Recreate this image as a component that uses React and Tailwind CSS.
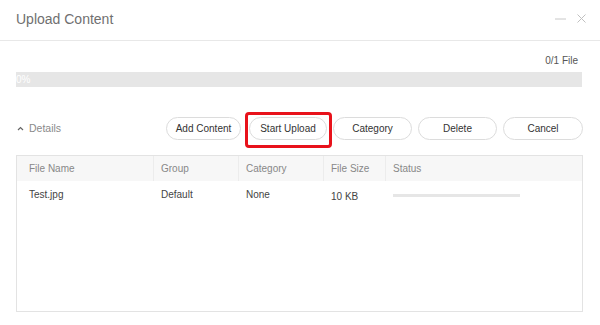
import React from "react";

const Btn = ({ children, w }) => (
  <button
    className={`h-[23px] ${w} rounded-full border border-[#dcdcdc] bg-white text-[10px] text-[#333] flex items-center justify-center`}
  >
    {children}
  </button>
);

export default function App() {
  return (
    <div className="w-[600px] h-[325px] bg-white font-['Liberation_Sans',Arial,sans-serif] overflow-hidden">
      {/* Title bar */}
      <div className="h-[41px] border-b border-[#e8e8e8] flex items-center justify-between pl-4 pr-[14px]">
        <span className="text-[14px] text-[#707070] -mt-[2px]">Upload Content</span>
        <div className="flex items-center gap-[11px] -mt-[3px]">
          <svg width="11" height="10" viewBox="0 0 11 10">
            <line x1="0" y1="5" x2="11" y2="5" stroke="#c8c8c8" strokeWidth="1" />
          </svg>
          <svg width="9" height="9" viewBox="0 0 9 9">
            <path d="M0.5 0.5 L8.5 8.5 M8.5 0.5 L0.5 8.5" stroke="#c0c0c0" strokeWidth="1" />
          </svg>
        </div>
      </div>

      <div className="pl-4 pr-[17px]">
        {/* file count */}
        <div className="h-[31px] flex items-center justify-end pr-[5px] pt-[7px]">
          <span className="text-[10px] text-[#555]">0/1 File</span>
        </div>
        {/* progress bar */}
        <div className="h-[15px] w-[566px] bg-[#e6e6e6] flex items-center">
          <span className="text-[10px] text-white leading-none">0%</span>
        </div>

        {/* details row */}
        <div className="mt-[30px] h-[23px] flex items-center">
          <div className="flex items-center gap-[5px] pl-[1px] flex-1">
            <svg width="7" height="5" viewBox="0 0 7 5">
              <path d="M1 4 L3.5 1.5 L6 4" stroke="#666" strokeWidth="1.2" fill="none" />
            </svg>
            <span className="text-[10.5px] text-[#8a8a8a]">Details</span>
          </div>
          <div className="flex items-center">
            <Btn w="w-[75px]">Add Content</Btn>
            <div className="relative ml-[8px]">
              <Btn w="w-[78px]">Start Upload</Btn>
              <div className="absolute left-[-4px] right-[-5px] top-[-5px] bottom-[-8px] border-[3px] border-[#e8121b] rounded-[4px] pointer-events-none" />
            </div>
            <div className="ml-[6px]">
              <Btn w="w-[79px]">Category</Btn>
            </div>
            <div className="ml-[6px]">
              <Btn w="w-[79px]">Delete</Btn>
            </div>
            <div className="ml-[6px]">
              <Btn w="w-[80px]">Cancel</Btn>
            </div>
          </div>
        </div>

        {/* table */}
        <div className="mt-[15px] h-[157px] w-[567px] border border-[#e3e3e3]">
          <div className="h-[25px] bg-[#f7f7f7] grid grid-cols-[137px_85px_85px_62px_1fr] text-[10px] text-[#888]">
            <div className="flex items-center pl-3 border-r border-[#ececec]">File Name</div>
            <div className="flex items-center pl-[7px] border-r border-[#ececec]">Group</div>
            <div className="flex items-center pl-[7px] border-r border-[#ececec]">Category</div>
            <div className="flex items-center pl-[7px] border-r border-[#ececec]">File Size</div>
            <div className="flex items-center pl-[7px]">Status</div>
          </div>
          <div className="h-[26px] grid grid-cols-[137px_85px_85px_62px_1fr] text-[10px] text-[#444]">
            <div className="flex items-center pl-3">Test.jpg</div>
            <div className="flex items-center pl-[7px]">Default</div>
            <div className="flex items-center pl-[7px]">None</div>
            <div className="flex items-center pl-[7px] pt-[5px]">10 KB</div>
            <div className="flex items-center pl-[7px] pt-[3px]">
              <div className="w-[127px] h-[3px] bg-[#e6e6e6]" />
            </div>
          </div>
        </div>
      </div>
    </div>
  );
}
